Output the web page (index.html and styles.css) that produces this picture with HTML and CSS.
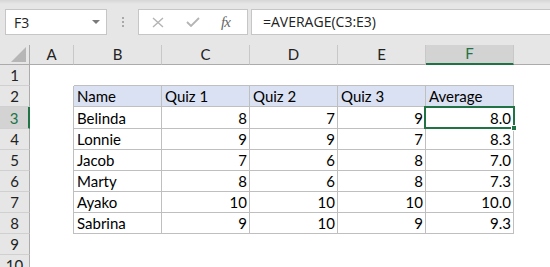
FILE: index.html
```html
<!doctype html>
<html lang="en-US">
  <head>
    <meta charset="utf-8">
    <meta name="viewport" content="width=device-width, initial-scale=1">
    <title>AVERAGE</title>
    <link rel="stylesheet" href="styles.css">
  </head>
  <body>
    <div class="toolbar">
      <div class="namebox">
        <span>F3</span>
        <svg class="caret" width="8" height="5" viewBox="0 0 8 5"><path d="M0 0h8L4 4z" fill="#7a7a7a"/></svg>
      </div>
      <div class="grip"><i></i><i></i><i></i></div>
      <div class="buttons">
        <svg class="btn" width="12" height="11" viewBox="0 0 12 11"><path d="M1 1l10 9M11 1L1 10" stroke="#b4b4b4" stroke-width="1.4" fill="none"/></svg>
        <svg class="btn" width="14" height="10" viewBox="0 0 14 10"><path d="M1 5l4 4 8-8" stroke="#b4b4b4" stroke-width="1.8" fill="none"/></svg>
        <span class="fx">fx</span>
      </div>
      <div class="formula">=AVERAGE(C3:E3)</div>
    </div>

    <div class="sheet">
      <!-- column headers -->
      <div class="ch corner"><svg width="15" height="15" viewBox="0 0 15 15"><path d="M15 0v15H0z" fill="#b6b6b6"/></svg></div>
      <div class="ch">A</div>
      <div class="ch">B</div>
      <div class="ch">C</div>
      <div class="ch">D</div>
      <div class="ch">E</div>
      <div class="ch active">F</div>
      <div class="ch last"></div>

      <!-- row 1 -->
      <div class="rh">1</div>
      <div class="c"></div>
      <div class="c top"></div>
      <div class="c top"></div>
      <div class="c top"></div>
      <div class="c top"></div>
      <div class="c top"></div>
      <div class="c"></div>

      <!-- row 2 -->
      <div class="rh">2</div>
      <div class="c edge"></div>
      <div class="c t th">Name</div>
      <div class="c t th">Quiz 1</div>
      <div class="c t th">Quiz 2</div>
      <div class="c t th">Quiz 3</div>
      <div class="c t th">Average</div>
      <div class="c"></div>

      <!-- row 3 -->
      <div class="rh active">3</div>
      <div class="c edge"></div>
      <div class="c t">Belinda</div>
      <div class="c t n">8</div>
      <div class="c t n">7</div>
      <div class="c t n">9</div>
      <div class="c t n selected">8.0<span class="sel"><span class="handle"></span></span></div>
      <div class="c"></div>

      <!-- row 4 -->
      <div class="rh">4</div>
      <div class="c edge"></div>
      <div class="c t">Lonnie</div>
      <div class="c t n">9</div>
      <div class="c t n">9</div>
      <div class="c t n">7</div>
      <div class="c t n">8.3</div>
      <div class="c"></div>

      <!-- row 5 -->
      <div class="rh">5</div>
      <div class="c edge"></div>
      <div class="c t">Jacob</div>
      <div class="c t n">7</div>
      <div class="c t n">6</div>
      <div class="c t n">8</div>
      <div class="c t n">7.0</div>
      <div class="c"></div>

      <!-- row 6 -->
      <div class="rh">6</div>
      <div class="c edge"></div>
      <div class="c t">Marty</div>
      <div class="c t n">8</div>
      <div class="c t n">6</div>
      <div class="c t n">8</div>
      <div class="c t n">7.3</div>
      <div class="c"></div>

      <!-- row 7 -->
      <div class="rh">7</div>
      <div class="c edge"></div>
      <div class="c t">Ayako</div>
      <div class="c t n">10</div>
      <div class="c t n">10</div>
      <div class="c t n">10</div>
      <div class="c t n">10.0</div>
      <div class="c"></div>

      <!-- row 8 -->
      <div class="rh">8</div>
      <div class="c edge"></div>
      <div class="c t">Sabrina</div>
      <div class="c t n">9</div>
      <div class="c t n">10</div>
      <div class="c t n">9</div>
      <div class="c t n">9.3</div>
      <div class="c"></div>

      <!-- rows 9, 10 -->
      <div class="rh">9</div>
      <div class="c"></div><div class="c"></div><div class="c"></div><div class="c"></div><div class="c"></div><div class="c"></div><div class="c"></div>
      <div class="rh">10</div>
      <div class="c"></div><div class="c"></div><div class="c"></div><div class="c"></div><div class="c"></div><div class="c"></div><div class="c"></div>
    </div>
  </body>
</html>
```
FILE: styles.css
```css
* {
  box-sizing: border-box;
}
body {
  margin: 0;
  background: #fff;
  font-family: Lato, "Liberation Sans", sans-serif;
  overflow: hidden;
}
.toolbar {
  display: flex;
  height: 45px;
  padding: 9px 0 0 5px;
  background: linear-gradient(#d6d6d6, #e6e6e6 4px);
}
.namebox {
  display: flex;
  align-items: center;
  justify-content: space-between;
  width: 102px;
  height: 26px;
  padding: 0 6px 0 8px;
  background: #fff;
  border: 1px solid #c6c6c6;
  font-family: "Open Sans", sans-serif;
  font-size: 14px;
  color: #222;
}
.grip {
  display: flex;
  flex-direction: column;
  align-items: center;
  justify-content: center;
  gap: 2px;
  width: 31px;
  height: 26px;
}
.grip i {
  width: 2px;
  height: 2px;
  background: #a8a8a8;
}
.buttons {
  display: flex;
  align-items: center;
  width: 110px;
  height: 26px;
  padding-left: 13px;
  background: #fff;
  border: 1px solid #c6c6c6;
}
.buttons .btn:first-child {
  margin-right: 22px;
}
.fx {
  margin-left: 21px;
  font-family: "Liberation Serif", serif;
  font-style: italic;
  font-size: 15px;
  color: #666;
  letter-spacing: -1px;
}
.formula {
  flex: 1;
  height: 26px;
  margin-left: 3px;
  padding: 2px 0 0 11px;
  background: #fff;
  border: 1px solid #c6c6c6;
  border-right: 0;
  font-family: "Open Sans", sans-serif;
  font-size: 14px;
  color: #222;
}
.sheet {
  display: grid;
  grid-template-columns: 30px 44px 88px 88px 88px 88px 88px 1fr;
  grid-template-rows: 20px 21px 21px 22px 21px 21px 21px 21px 21px 21px 21px;
  font-size: 15px;
  color: #000;
}
.ch {
  display: flex;
  align-items: flex-end;
  justify-content: center;
  padding-bottom: 1px;
  background: #e6e6e6;
  border-right: 1px solid #c8c8c8;
  border-bottom: 1px solid #ababab;
  color: #222;
}
.ch.corner {
  align-items: flex-end;
  justify-content: flex-end;
  padding: 0 3px 2px 0;
  border-right-color: #ababab;
}
.ch.last {
  border-right: 0;
}
.ch.active {
  background: #d3d3d3;
  border-bottom: 2px solid #217346;
  color: #217346;
}
.rh {
  display: flex;
  align-items: flex-end;
  justify-content: center;
  padding-bottom: 1px;
  background: #e6e6e6;
  border-right: 1px solid #ababab;
  border-bottom: 1px solid #d0d0d0;
  color: #222;
}
.rh.active {
  background: #d3d3d3;
  border-right: 2px solid #217346;
  color: #217346;
}
.c {
  display: flex;
  align-items: flex-end;
  padding: 0 2px 1px 3px;
  white-space: nowrap;
}
.top {
  border-bottom: 1px solid #bfbfbf;
}
.edge {
  border-right: 1px solid #bfbfbf;
}
.t {
  border-right: 1px solid #bfbfbf;
  border-bottom: 1px solid #bfbfbf;
}
.th {
  background: #d9e1f2;
}
.n {
  justify-content: flex-end;
}
.selected {
  position: relative;
}
.sel {
  position: absolute;
  top: -1px;
  left: -2px;
  right: -2px;
  bottom: -1px;
  border: 2px solid #217346;
}
.handle {
  position: absolute;
  right: -4px;
  bottom: -4px;
  width: 6px;
  height: 6px;
  background: #217346;
  border: 1px solid #fff;
}
```
